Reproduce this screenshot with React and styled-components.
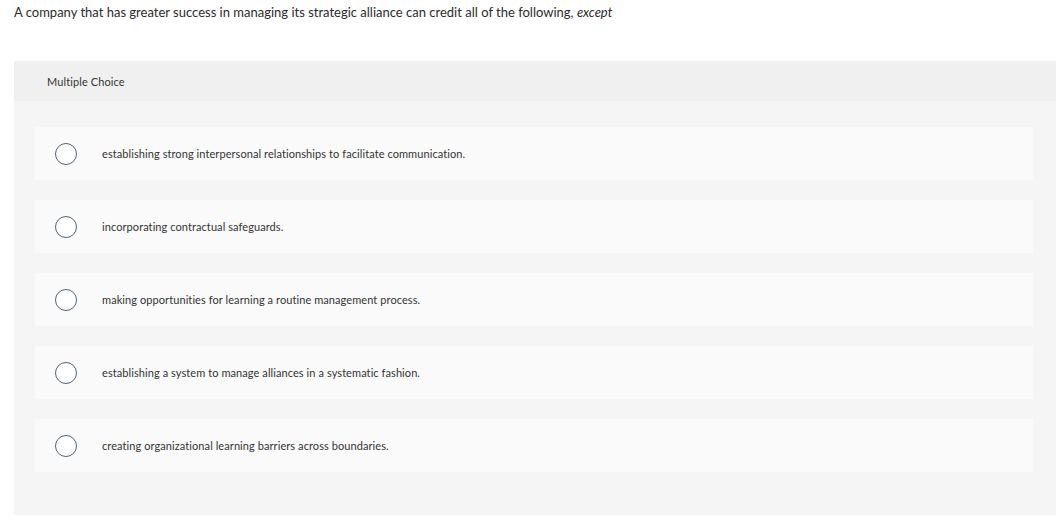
import React from "react";
import styled, { createGlobalStyle } from "styled-components";

const Global = createGlobalStyle`
  html, body { margin: 0; padding: 0; background: #ffffff; }
  body { font-family: Lato, "Liberation Sans", sans-serif; color: #333333; }
`;

const Page = styled.div`
  width: 1063px;
  padding: 4px 0 0 14px;
  box-sizing: border-box;
`;

const Question = styled.div`
  font-size: 13px;
  line-height: 16px;
  color: #2b2b2b;
  height: 57px;
  em { font-style: italic; }
`;

const Panel = styled.div`
  width: 1042px;
  background: #f5f5f5;
  padding-bottom: 43px;
`;

const Header = styled.div`
  height: 40px;
  background: #f0f0f0;
  display: flex;
  align-items: center;
  padding-left: 33px;
  font-size: 11px;
  letter-spacing: 0.1px;
  color: #333333;
`;

const List = styled.div`
  display: flex;
  flex-direction: column;
  gap: 20px;
  padding: 26px 23px 0 21px;
`;

const Option = styled.label`
  display: flex;
  align-items: center;
  height: 53px;
  background: #fafafa;
  padding-left: 20px;
  gap: 25px;
  font-size: 11px;
  letter-spacing: 0.08px;
  color: #333333;
  cursor: pointer;
  span:last-child { margin-top: -1px; }
`;

const Radio = styled.span`
  width: 22px;
  height: 22px;
  box-sizing: border-box;
  border: 1.5px solid #4f6378;
  border-radius: 50%;
  background: #ffffff;
  flex: none;
`;

const options = [
  "establishing strong interpersonal relationships to facilitate communication.",
  "incorporating contractual safeguards.",
  "making opportunities for learning a routine management process.",
  "establishing a system to manage alliances in a systematic fashion.",
  "creating organizational learning barriers across boundaries.",
];

export default function App() {
  return (
    <>
      <Global />
      <Page>
        <Question>
          A company that has greater success in managing its strategic alliance can credit all of the following, <em>except</em>
        </Question>
        <Panel>
          <Header>Multiple Choice</Header>
          <List>
            {options.map((o) => (
              <Option key={o}>
                <Radio />
                <span>{o}</span>
              </Option>
            ))}
          </List>
        </Panel>
      </Page>
    </>
  );
}
